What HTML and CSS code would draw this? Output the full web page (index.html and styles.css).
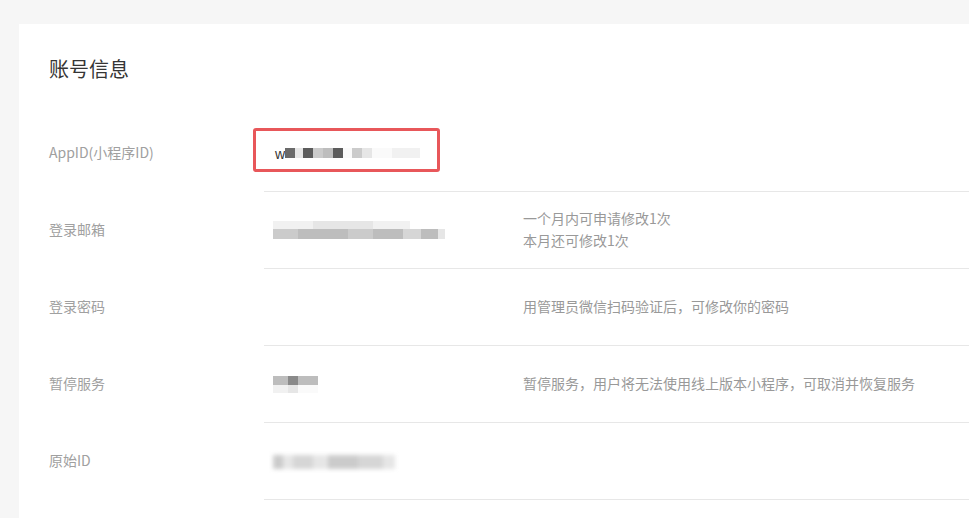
FILE: index.html
```html
<!DOCTYPE html>
<html lang="zh-CN">
<head>
    <meta charset="UTF-8">
    <title>账号信息</title>
    <link rel="stylesheet" href="styles.css">
</head>
<body>

<div class="card">
    <h2 class="card-title">账号信息</h2>

    <!-- AppID -->
    <div class="row">
        <div class="label">AppID(小程序ID)</div>
        <div class="body">
            <div class="value">
                <span class="appid-w">w</span>
                <span class="mosaic">
                    <i class="b w10 c6"></i><i class="b w8 ce"></i><i class="b w10 c5"></i><i class="b w10 cc"></i><i class="b w10 cb"></i><i class="b w10 c5"></i><i class="b w9 cf"></i><i class="b w10 cc"></i><i class="b w10 ce"></i><i class="b w20 cf"></i><i class="b w28 cf0"></i>
                </span>
                <span class="highlight"></span>
            </div>
            <div class="desc"></div>
        </div>
    </div>

    <!-- 登录邮箱 -->
    <div class="row">
        <div class="label">登录邮箱</div>
        <div class="body">
            <div class="value">
                <span class="mosaic-2">
                    <span class="mosaic-line">
                        <i class="b w40 h8 cf0"></i><i class="b w60 h8 ce"></i><i class="b w37 h8 cf0"></i>
                    </span>
                    <span class="mosaic-line">
                        <i class="b w25 cc"></i><i class="b w50 cb"></i><i class="b w25 cc"></i><i class="b w30 cb"></i><i class="b w18 cd"></i><i class="b w17 cb"></i><i class="b w7 ce"></i>
                    </span>
                </span>
            </div>
            <div class="desc">
                <p>一个月内可申请修改1次</p>
                <p>本月还可修改1次</p>
            </div>
        </div>
    </div>

    <!-- 登录密码 -->
    <div class="row">
        <div class="label">登录密码</div>
        <div class="body">
            <div class="value"></div>
            <div class="desc">用管理员微信扫码验证后，可修改你的密码</div>
        </div>
    </div>

    <!-- 暂停服务 -->
    <div class="row">
        <div class="label">暂停服务</div>
        <div class="body">
            <div class="value">
                <span class="mosaic-2">
                    <span class="mosaic-line">
                        <i class="b w15 h9 cb"></i><i class="b w10 h9 c8"></i><i class="b w20 h9 cb"></i>
                    </span>
                    <span class="mosaic-line">
                        <i class="b w15 h8 cf0"></i><i class="b w10 h8 ce"></i><i class="b w20 h8 cf"></i>
                    </span>
                </span>
            </div>
            <div class="desc">暂停服务，用户将无法使用线上版本小程序，可取消并恢复服务</div>
        </div>
    </div>

    <!-- 原始ID -->
    <div class="row">
        <div class="label">原始ID</div>
        <div class="body">
            <div class="value">
                <span class="mosaic blur">
                    <i class="b w10 h14 cc"></i><i class="b w10 h14 ce"></i><i class="b w20 h14 cd"></i><i class="b w15 h14 ce"></i><i class="b w30 h14 cc"></i><i class="b w25 h14 cd"></i><i class="b w12 h14 ce"></i>
                </span>
            </div>
            <div class="desc"></div>
        </div>
    </div>
</div>

</body>
</html>
```

FILE: styles.css
```css
html, body {
    margin: 0;
    padding: 0;
}
body {
    background-color: #f6f6f6;
    font-family: "Microsoft YaHei", "Noto Sans CJK SC", "Liberation Sans", sans-serif;
    font-size: 14px;
    color: #333;
    overflow: hidden;
}
.card {
    margin: 24px 0 0 19px;
    width: 950px;
    height: 494px;
    background-color: #fff;
    padding: 0 0 0 30px;
    box-sizing: border-box;
    overflow: hidden;
}
.card-title {
    margin: 0;
    padding-top: 31px;
    height: 28px;
    line-height: 28px;
    font-size: 20px;
    font-weight: normal;
    color: #353535;
    margin-bottom: 32px;
}
.row {
    display: flex;
    height: 77px;
}
.label {
    width: 215px;
    flex-shrink: 0;
    align-self: center;
    color: #a0a0a0;
    line-height: 20px;
    margin-bottom: 3px;
}
.body {
    flex: 1;
    display: flex;
    align-items: center;
    border-bottom: 1px solid #e7e7e7;
    padding-left: 9px;
}
.value {
    position: relative;
    width: 250px;
    flex-shrink: 0;
    display: flex;
    align-items: center;
    height: 100%;
}
.desc {
    color: #999;
    line-height: 22px;
    margin-bottom: 3px;
}
.desc p {
    margin: 0;
}
.appid-w {
    color: #353535;
    font-family: "Liberation Sans", sans-serif;
    font-size: 14px;
    margin-left: 2px;
    margin-top: 1px;
}
.mosaic {
    display: flex;
    align-items: center;
}
.mosaic-2 {
    display: flex;
    flex-direction: column;
}
.mosaic-line {
    display: flex;
}
.blur {
    filter: blur(2px);
    margin-top: 2px;
}
.b {
    display: block;
    height: 10px;
}
.h8 { height: 8px; }
.h9 { height: 9px; }
.h14 { height: 14px; }
.w7 { width: 7px; }
.w8 { width: 8px; }
.w9 { width: 9px; }
.w10 { width: 10px; }
.w12 { width: 12px; }
.w15 { width: 15px; }
.w17 { width: 17px; }
.w18 { width: 18px; }
.w20 { width: 20px; }
.w25 { width: 25px; }
.w28 { width: 28px; }
.w30 { width: 30px; }
.w37 { width: 37px; }
.w40 { width: 40px; }
.w50 { width: 50px; }
.w60 { width: 60px; }
.c5 { background-color: #5c5c5c; }
.c6 { background-color: #6a6a6a; }
.c8 { background-color: #8a8a8a; }
.cb { background-color: #bdbdbd; }
.cc { background-color: #cbcbcb; }
.cd { background-color: #d6d6d6; }
.ce { background-color: #e6e6e6; }
.cf { background-color: #fafafa; }
.cf0 { background-color: #f1f1f1; }
.highlight {
    position: absolute;
    left: -20px;
    top: 13px;
    width: 187px;
    height: 44px;
    box-sizing: border-box;
    border: 3px solid #e8575a;
    border-radius: 3px;
}
```
